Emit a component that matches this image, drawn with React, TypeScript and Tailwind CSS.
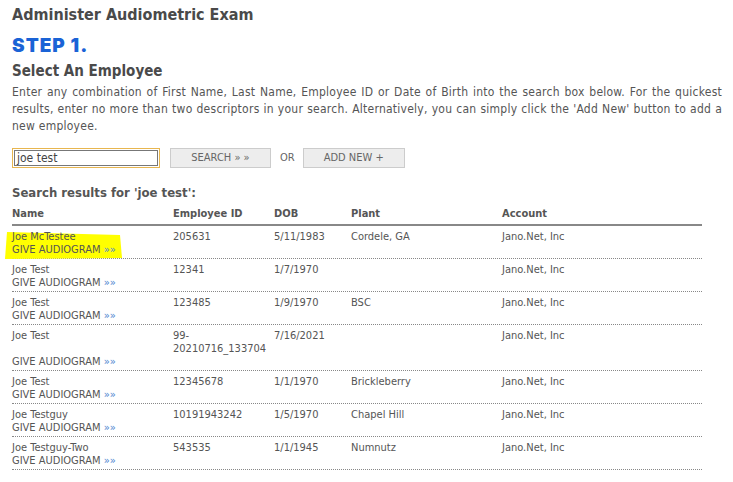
import React from "react";

const rows = [
  { name: "Joe McTestee", id: ["205631"], dob: "5/11/1983", plant: "Cordele, GA", hl: true },
  { name: "Joe Test", id: ["12341"], dob: "1/7/1970", plant: "" },
  { name: "Joe Test", id: ["123485"], dob: "1/9/1970", plant: "BSC" },
  { name: "Joe Test", id: ["99-", "20210716_133704"], dob: "7/16/2021", plant: "" },
  { name: "Joe Test", id: ["12345678"], dob: "1/1/1970", plant: "Brickleberry" },
  { name: "Joe Testguy", id: ["10191943242"], dob: "1/5/1970", plant: "Chapel Hill" },
  { name: "Joe Testguy-Two", id: ["543535"], dob: "1/1/1945", plant: "Numnutz" },
];

export default function App() {
  return (
    <div
      className="w-[733px] h-[482px] bg-white text-[#555] overflow-hidden pl-[12px] pr-[11px] pt-[4px]"
      style={{ fontFamily: 'Tahoma, "DejaVu Sans Condensed", "Liberation Sans", sans-serif' }}
    >
      <h1 className="text-[16px] font-bold leading-[22px] text-[#4a4a4a]">Administer Audiometric Exam</h1>
      <div
        className="mt-[9px] text-[19px] font-black leading-[22px] tracking-[1px] text-[#1a63d6]"
        style={{ fontFamily: 'Inter, "Liberation Sans", sans-serif' }}
      >
        STEP 1.
      </div>
      <h2 className="mt-[4px] text-[15px] font-bold leading-[20px] text-[#4a4a4a]">Select An Employee</h2>
      <p className="mt-[3px] text-[12px] leading-[17px] tracking-[0.25px] text-justify">
        Enter any combination of First Name, Last Name, Employee ID or Date of Birth into the search box below. For the quickest results, enter no more than two descriptors in your search. Alternatively, you can simply click the 'Add New' button to add a new employee.
      </p>
      <div className="mt-[13px] flex items-center h-[20px]">
        <div className="w-[148px] h-[20px] border border-[#e8b64f] p-px">
          <div className="h-full border border-[#777] px-[2px] text-[12px] leading-[14px] text-[#444]">joe test</div>
        </div>
        <div className="ml-[10px] w-[101px] h-[20px] border border-[#ccc] bg-[#ededed] text-[11px] leading-[18px] text-center text-[#666]">
          SEARCH » »
        </div>
        <span className="ml-[9px] text-[11px] text-[#666]">OR</span>
        <div className="ml-[8px] w-[102px] h-[20px] border border-[#ccc] bg-[#ededed] text-[11px] leading-[18px] text-center text-[#666]">
          ADD NEW +
        </div>
      </div>
      <div className="mt-[17px] text-[13px] font-bold leading-[16px]">Search results for 'joe test':</div>
      <div className="mt-[6px] w-[690px] text-[11px]">
        <div className="flex h-[19px] border-b-2 border-[#888] font-bold leading-[14px] text-[#555]">
          <div className="w-[161px]">Name</div>
          <div className="w-[101px]">Employee ID</div>
          <div className="w-[77px]">DOB</div>
          <div className="w-[151px]">Plant</div>
          <div>Account</div>
        </div>
        {rows.map((r, i) => (
          <div key={i} className="relative flex pt-[4px] pb-[2px] border-b border-dotted border-[#888] leading-[13px]">
            {r.hl && (
              <svg className="absolute left-[-8px] top-[2px]" width="122" height="32" viewBox="0 0 122 32">
                <path d="M3 4 L116 7 L118 30 L1 31 Z" fill="#ffff00" />
              </svg>
            )}
            <div className="relative w-[161px] flex flex-col justify-between">
              <div>{r.name}</div>
              <div>
                GIVE AUDIOGRAM <span className="text-[#4f86d0]">»»</span>
              </div>
            </div>
            <div className="w-[101px]">
              {r.id.map((t, j) => (
                <div key={j}>{t}</div>
              ))}
              {r.id.length > 1 && <div>&nbsp;</div>}
            </div>
            <div className="w-[77px]">{r.dob}</div>
            <div className="w-[151px]">{r.plant}</div>
            <div>Jano.Net, Inc</div>
          </div>
        ))}
      </div>
    </div>
  );
}
